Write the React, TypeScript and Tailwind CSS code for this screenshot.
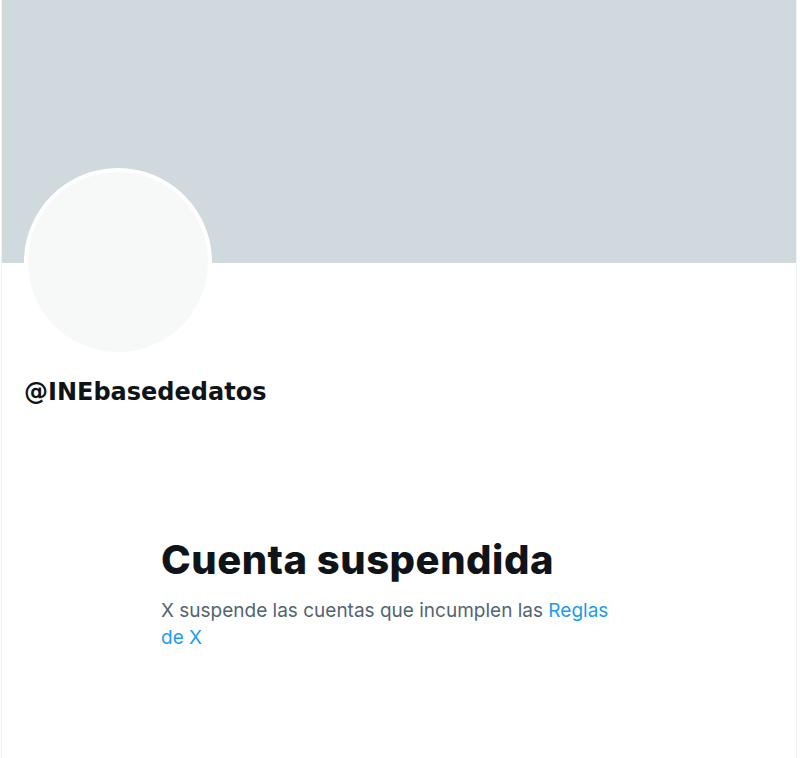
export default function App() {
  return (
    <div className="w-[800px] h-[758px] bg-white overflow-hidden" style={{ fontFamily: "Inter, 'Noto Sans', sans-serif" }}>
      <div className="mx-[1px] w-[796px] h-full border-x border-[#eff3f4] flex flex-col">
        <div className="h-[263px] bg-[#cfd9de] shrink-0" />
        <div className="relative px-[22px]">
          <div className="-mt-[95px] w-[188px] h-[188px] rounded-full bg-[#f7f9f9] border-4 border-white" />
          <div
            className="mt-[22px] text-[24px] leading-[28px] font-bold text-[#0f1419]"
            style={{ fontFamily: "'DejaVu Sans', sans-serif" }}
          >
            @INEbasededatos
          </div>
        </div>
        <div className="mt-[131px] ml-[159px] w-[460px]">
          <h1 className="text-[40px] leading-[46px] font-extrabold text-[#0f1419] tracking-[0.5px]">Cuenta suspendida</h1>
          <p className="mt-[14px] text-[19px] leading-[27px] text-[#536471]">
            X suspende las cuentas que incumplen las <span className="text-[#1d9bf0]">Reglas de X</span>
          </p>
        </div>
      </div>
    </div>
  );
}
